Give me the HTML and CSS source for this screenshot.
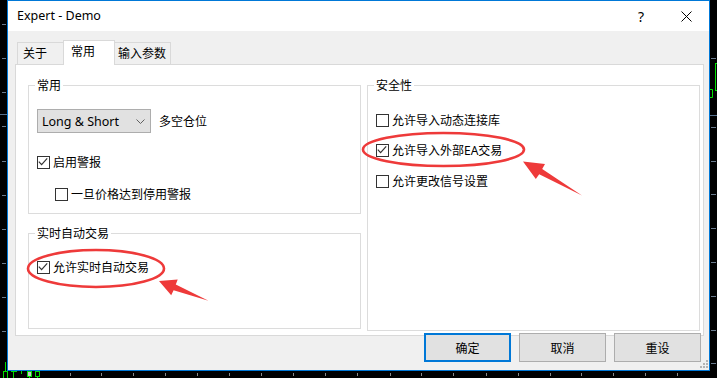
FILE: index.html
```html
<!DOCTYPE html>
<html lang="zh-CN">

<head>
  <meta charset="UTF-8">
  <title>Expert - Demo</title>
  <link rel="stylesheet" href="styles.css">
</head>

<body>
  <!-- chart behind the dialog -->
  <svg class="chart" width="717" height="378" viewBox="0 0 717 378">
    <g stroke="#6a7a8c" stroke-width="1">
      <line x1="2" x2="6" y1="24.5" y2="24.5" />
      <line x1="2" x2="6" y1="58.5" y2="58.5" />
      <line x1="2" x2="6" y1="92.5" y2="92.5" />
      <line x1="2" x2="6" y1="126.5" y2="126.5" />
      <line x1="2" x2="6" y1="161.5" y2="161.5" />
      <line x1="2" x2="6" y1="195.5" y2="195.5" />
      <line x1="2" x2="6" y1="229.5" y2="229.5" />
      <line x1="2" x2="6" y1="263.5" y2="263.5" />
      <line x1="2" x2="6" y1="297.5" y2="297.5" />
      <line x1="2" x2="6" y1="331.5" y2="331.5" />
      <line x1="711" x2="716" y1="58.5" y2="58.5" />
      <line x1="711" x2="716" y1="127.5" y2="127.5" />
      <line x1="711" x2="716" y1="161.5" y2="161.5" />
      <line x1="711" x2="716" y1="194.5" y2="194.5" />
      <line x1="711" x2="716" y1="228.5" y2="228.5" />
      <line x1="711" x2="716" y1="262.5" y2="262.5" />
      <line x1="711" x2="716" y1="296.5" y2="296.5" />
      <line x1="711" x2="716" y1="330.5" y2="330.5" />
      <line x1="711" x2="716" y1="363.5" y2="363.5" />
    </g>
    <line x1="0" x2="7" y1="114.5" y2="114.5" stroke="#56708c" />
    <line x1="710" x2="717" y1="115.5" y2="115.5" stroke="#56708c" />
    <g stroke="#8a8a8a">
      <line x1="70.5" x2="70.5" y1="373" y2="376" />
      <line x1="101.5" x2="101.5" y1="373" y2="376" />
      <line x1="133.5" x2="133.5" y1="373" y2="376" />
      <line x1="165.5" x2="165.5" y1="373" y2="376" />
      <line x1="197.5" x2="197.5" y1="373" y2="376" />
      <line x1="229.5" x2="229.5" y1="373" y2="376" />
      <line x1="261.5" x2="261.5" y1="373" y2="376" />
      <line x1="293.5" x2="293.5" y1="373" y2="376" />
      <line x1="325.5" x2="325.5" y1="373" y2="376" />
      <line x1="357.5" x2="357.5" y1="373" y2="376" />
      <line x1="390.5" x2="390.5" y1="373" y2="376" />
      <line x1="421.5" x2="421.5" y1="373" y2="376" />
      <line x1="453.5" x2="453.5" y1="373" y2="376" />
      <line x1="486.5" x2="486.5" y1="373" y2="376" />
      <line x1="518.5" x2="518.5" y1="373" y2="376" />
      <line x1="550.5" x2="550.5" y1="373" y2="376" />
      <line x1="581.5" x2="581.5" y1="373" y2="376" />
      <line x1="613.5" x2="613.5" y1="373" y2="376" />
      <line x1="645.5" x2="645.5" y1="373" y2="376" />
      <line x1="677.5" x2="677.5" y1="373" y2="376" />
    </g>
    <g fill="none" stroke="#00e000" stroke-width="1">
      <rect x="715.5" y="63.5" width="4" height="27" />
      <path d="M710 89.5 H712.5 V97.5 H710" />
      <line x1="5.5" x2="5.5" y1="362" y2="371" />
      <rect x="3.5" y="371.5" width="4" height="8" />
      <line x1="11" x2="17" y1="371.5" y2="371.5" />
      <line x1="13.5" x2="13.5" y1="371" y2="378" />
      <line x1="21.5" x2="21.5" y1="371" y2="374" />
      <rect x="27.5" y="371.5" width="4" height="5" fill="#c8c8c8" />
      <line x1="29.5" x2="29.5" y1="377" y2="378" />
      <rect x="35.5" y="371.5" width="4" height="5" />
      <line x1="37.5" x2="37.5" y1="377" y2="378" />
    </g>
  </svg>

  <div class="dialog">
    <div class="titlebar">
      <span class="title">Expert - Demo</span>
      <span class="cap-btn help">?</span>
      <span class="cap-btn close">
        <svg width="11" height="11" viewBox="0 0 11 11">
          <path d="M0.5 0.5 L10.5 10.5 M10.5 0.5 L0.5 10.5" stroke="#000" stroke-width="1" />
        </svg>
      </span>
    </div>

    <div class="client">
      <div class="tabs">
        <div class="tab t-about">关于</div>
        <div class="tab active">常用</div>
        <div class="tab t-inputs">输入参数</div>
      </div>

      <div class="panel">
        <div class="col">
          <fieldset class="group g-common">
            <legend>常用</legend>
            <div class="select-row">
              <div class="select">
                <span>Long &amp; Short</span>
                <svg width="9" height="5" viewBox="0 0 9 5">
                  <path d="M0.5 0.5 L4.5 4.5 L8.5 0.5" fill="none" stroke="#606060" />
                </svg>
              </div>
              <span>多空仓位</span>
            </div>
            <label class="check c-alert">
              <span class="box">
                <svg width="11" height="11" viewBox="0 0 11 11">
                  <path d="M0.8 4.6 L3.6 7.6 L9.2 1.4" fill="none" stroke="#333" stroke-width="1.2" />
                </svg>
              </span>
              启用警报
            </label>
            <label class="check c-stop">
              <span class="box"></span>
              一旦价格达到停用警报
            </label>
          </fieldset>

          <fieldset class="group g-auto">
            <legend>实时自动交易</legend>
            <label class="check c-live">
              <span class="box">
                <svg width="11" height="11" viewBox="0 0 11 11">
                  <path d="M0.8 4.6 L3.6 7.6 L9.2 1.4" fill="none" stroke="#333" stroke-width="1.2" />
                </svg>
              </span>
              允许实时自动交易
            </label>
          </fieldset>
        </div>

        <fieldset class="group g-safe">
          <legend>安全性</legend>
          <label class="check c-dll">
            <span class="box"></span>
            允许导入动态连接库
          </label>
          <label class="check c-ea">
            <span class="box">
              <svg width="11" height="11" viewBox="0 0 11 11">
                <path d="M0.8 4.6 L3.6 7.6 L9.2 1.4" fill="none" stroke="#333" stroke-width="1.2" />
              </svg>
            </span>
            允许导入外部EA交易
          </label>
          <label class="check c-signal">
            <span class="box"></span>
            允许更改信号设置
          </label>
        </fieldset>
      </div>

      <div class="buttons">
        <button type="button" class="btn default">确定</button>
        <button type="button" class="btn">取消</button>
        <button type="button" class="btn">重设</button>
      </div>
    </div>

    <svg class="grip" width="8" height="8" viewBox="0 0 8 8">
      <g fill="#b4b4b4">
        <rect x="6" y="0" width="2" height="2" />
        <rect x="3" y="3" width="2" height="2" />
        <rect x="6" y="3" width="2" height="2" />
        <rect x="0" y="6" width="2" height="2" />
        <rect x="3" y="6" width="2" height="2" />
        <rect x="6" y="6" width="2" height="2" />
      </g>
    </svg>
  </div>

  <!-- red marks drawn over the screenshot -->
  <svg class="marks" width="717" height="378" viewBox="0 0 717 378">
    <g fill="none" stroke="#ee3a3a" stroke-width="2.6">
      <ellipse cx="96" cy="268.5" rx="68" ry="18.5" />
      <ellipse cx="443.5" cy="149.5" rx="80.5" ry="16.5" />
    </g>
    <g fill="#ee3a3a">
      <path d="M159 281 L177.7 279.5 L175.8 284.6 L208.5 300.8 L173.6 290.2 L171.2 295.2 Z" />
      <path d="M523 161.5 L545 164 L542.2 169 L582 195.5 L539.2 174.2 L535.8 179 Z" />
    </g>
  </svg>
</body>

</html>
```

FILE: styles.css
```css
body {
  margin: 0;
  width: 717px;
  height: 378px;
  overflow: hidden;
  position: relative;
  background: #000;
  font-family: "Noto Sans", "Noto Sans CJK SC", sans-serif;
  font-size: 12px;
  color: #000;
}

.chart,
.marks {
  position: absolute;
  left: 0;
  top: 0;
  pointer-events: none;
}

.dialog {
  position: relative;
  box-sizing: border-box;
  width: 703px;
  height: 371px;
  margin-left: 7px;
  border: 1px solid #0078d7;
  background: #f0f0f0;
}

.titlebar {
  display: flex;
  align-items: center;
  height: 30px;
  background: #fff;
}

.title {
  padding-left: 9px;
  font-size: 12.5px;
  line-height: 30px;
}

.cap-btn {
  display: flex;
  align-items: center;
  justify-content: center;
  height: 30px;
}

.help {
  margin-left: auto;
  width: 46px;
  font-size: 14px;
}

.close {
  width: 45px;
}

.client {
  padding-top: 9px;
}

.tabs {
  display: flex;
  align-items: flex-end;
  height: 24px;
  padding-left: 9px;
}

.tab {
  box-sizing: border-box;
  height: 22px;
  line-height: 21px;
  border: 1px solid #d9d9d9;
  border-bottom: none;
  background: #f0f0f0;
}

.t-about {
  width: 46px;
  padding-left: 5px;
  border-right: none;
}

.tab.active {
  position: relative;
  z-index: 1;
  width: 52px;
  height: 25px;
  margin-bottom: -1px;
  padding-left: 7px;
  line-height: 22px;
  background: #fff;
}

.t-inputs {
  width: 56px;
  padding-left: 3px;
  border-left: none;
}

.panel {
  box-sizing: border-box;
  display: grid;
  grid-template-columns: 333px 333px;
  column-gap: 6px;
  align-items: start;
  width: 689px;
  height: 272px;
  margin-left: 7px;
  padding: 12px 3px 0 12px;
  border: 1px solid #d9d9d9;
  background: #fff;
}

.group {
  box-sizing: border-box;
  margin: 0;
  padding: 0 8px;
  min-width: 0;
  border: 1px solid #dcdcdc;
}

.group legend {
  height: 17px;
  margin-left: -2px;
  padding: 0 2px;
  line-height: 17px;
}

.g-common {
  height: 137px;
}

.g-auto {
  height: 104px;
  margin-top: 11px;
}

.g-safe {
  height: 254px;
}

.select-row {
  display: flex;
  align-items: center;
  gap: 8px;
  margin-top: 15px;
}

.select {
  box-sizing: border-box;
  display: flex;
  align-items: center;
  justify-content: space-between;
  width: 114px;
  height: 24px;
  padding: 0 5px 0 4px;
  border: 1px solid #adadad;
  background: #e1e1e1;
  font-size: 12.5px;
}

.check {
  display: flex;
  align-items: center;
  gap: 3px;
  height: 15px;
  line-height: 15px;
}

.box {
  box-sizing: border-box;
  display: flex;
  width: 13px;
  height: 13px;
  border: 1px solid #333;
  background: #fff;
}

.c-alert {
  margin-top: 22px;
}

.c-stop {
  margin-top: 17px;
  margin-left: 18px;
}

.c-live {
  margin-top: 18px;
}

.c-dll {
  margin-top: 19px;
}

.c-ea {
  margin-top: 15px;
}

.c-signal {
  margin-top: 16px;
}

.buttons {
  display: flex;
  justify-content: flex-end;
  gap: 8px;
  margin-top: -3px;
  padding-right: 8px;
}

.btn {
  box-sizing: border-box;
  width: 87px;
  height: 29px;
  margin: 0;
  padding: 0;
  border: 1px solid #adadad;
  background: #e1e1e1;
  font-family: inherit;
  font-size: 12px;
  color: #000;
}

.btn.default {
  border: 2px solid #0078d7;
}

.grip {
  position: absolute;
  right: 1px;
  bottom: 2px;
}
```
